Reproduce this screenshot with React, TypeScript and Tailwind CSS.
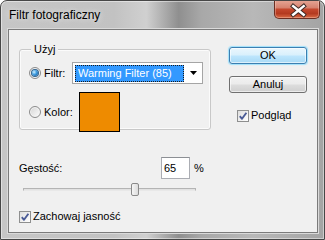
import React from "react";

function Radio({ checked }: { checked?: boolean }) {
  return (
    <span className="w-[12px] h-[12px] shrink-0 rounded-full border border-[#8c8c8c] bg-[linear-gradient(135deg,#d4d4d4,#fdfdfd)] flex items-center justify-center shadow-[inset_0_0_0_1px_#f4f4f4]">
      {checked && (
        <span className="w-[6px] h-[6px] rounded-full bg-[radial-gradient(circle_at_35%_35%,#d2f2ff_0%,#3d9be0_45%,#0d4a86_100%)] shadow-[0_0_0_1px_#33658f]" />
      )}
    </span>
  );
}

function Check() {
  return (
    <span className="w-[12px] h-[12px] shrink-0 border border-[#8e8f8f] bg-[linear-gradient(135deg,#dedede,#ffffff)] flex items-center justify-center">
      <svg width="10" height="10" viewBox="0 0 10 10">
        <path d="M1.8 5.2 L4 7.8 L8.4 1.8" fill="none" stroke="#4a5b96" strokeWidth="1.9" strokeLinejoin="round" />
      </svg>
    </span>
  );
}

export default function App() {
  return (
    <div className="w-[325px] h-[240px] bg-white font-['Liberation_Sans',Arial,sans-serif] text-[11px] text-black leading-[13px]">
      <div className="w-[325px] h-[240px] rounded-t-[7px] border border-[#474747] flex flex-col overflow-hidden shadow-[inset_0_0_0_1px_rgba(255,255,255,0.45)] bg-[linear-gradient(90deg,#c6c6c6_0%,#c2c2c2_35%,#d0d0d0_45%,#8f8f8f_55%,#a8a8a8_62%,#b8b8b8_78%,#a4a4a4_100%)]">
        <div className="h-[28px] flex items-start shrink-0">
          <div className="h-[28px] flex items-center pl-[8px] text-[12px] text-black [text-shadow:0_0_6px_rgba(255,255,255,0.8)]">
            Filtr fotograficzny
          </div>
          <div className="ml-auto mr-[4px] -mt-[1px] w-[46px] h-[19px] rounded-b-[5px] border border-[#6b2e22] border-t-0 bg-[linear-gradient(180deg,#e6a797_0%,#d68370_42%,#c4472d_52%,#b43a20_75%,#d96a44_100%)] shadow-[inset_0_0_0_1px_rgba(255,220,210,0.35)] flex items-center justify-center">
            <svg width="46" height="19" viewBox="0 0 46 19">
              <path d="M19 6 L30 15 M30 6 L19 15" stroke="#3d2a26" strokeWidth="4.6" strokeLinecap="square" />
              <path d="M19 6 L30 15 M30 6 L19 15" stroke="#ffffff" strokeWidth="2.6" strokeLinecap="square" />
            </svg>
          </div>
        </div>
        <div className="flex-1 ml-[7px] mr-[6px] mb-[6px] bg-[#f0f0f0] border border-[#7b7b7b] shadow-[0_0_0_1px_#dadada] pt-[17px] pl-[10px] flex flex-col">
          <div className="flex items-start">
            <div className="mt-[2px] w-[192px] h-[81px] border border-[#c8c8c8] rounded-[3px] relative pt-[12px] pl-[9px] shadow-[inset_0_0_0_1px_#fbfbfb]">
              <span className="absolute left-[11px] top-[-7px] px-[3px] bg-[#f0f0f0]">Użyj</span>
              <div className="flex items-center h-[22px]">
                <div className="w-[43px] flex items-center">
                  <Radio checked />
                  <span className="ml-[3px]">Filtr:</span>
                </div>
                <div className="w-[131px] h-[22px] bg-white border border-[#a5a5a5] flex items-center pl-[2px] pr-[5px]">
                  <div className="w-[109px] h-[17px] bg-[#3399ff] text-white border border-dotted border-[#1a1a1a] flex items-center pl-[2px]">
                    Warming Filter (85)
                  </div>
                  <svg className="ml-auto" width="7" height="4" viewBox="0 0 7 4">
                    <path d="M0 0 H7 L3.5 4 Z" fill="#000" />
                  </svg>
                </div>
              </div>
              <div className="mt-[8px] flex items-center">
                <div className="w-[43px] flex items-center">
                  <Radio />
                  <span className="ml-[3px]">Kolor:</span>
                </div>
                <div className="ml-[7px] w-[41px] h-[40px] bg-[#ee8b00] border border-black relative" />
              </div>
            </div>
            <div className="ml-[18px] flex flex-col">
              <div className="w-[78px] h-[17px] rounded-[3px] border border-[#3c7fb1] bg-[linear-gradient(180deg,#eaf6fd_0%,#d9f0fc_48%,#bee6fd_52%,#a7d9f5_100%)] shadow-[inset_0_0_0_1px_rgba(255,255,255,0.6),0_0_1px_1px_#9fe0fb] flex items-center justify-center">
                OK
              </div>
              <div className="mt-[12px] w-[78px] h-[17px] rounded-[3px] border border-[#707070] bg-[linear-gradient(180deg,#f2f2f2_0%,#ebebeb_48%,#dddddd_52%,#cfcfcf_100%)] shadow-[inset_0_0_0_1px_rgba(255,255,255,0.6)] flex items-center justify-center">
                Anuluj
              </div>
              <div className="mt-[16px] pl-[8px] flex items-center">
                <Check />
                <span className="ml-[2px]">Podgląd</span>
              </div>
            </div>
          </div>
          <div className="mt-[27px] flex items-center h-[22px]">
            <span className="w-[142px]">Gęstość:</span>
            <div className="w-[29px] h-[22px] bg-white border border-[#abadb3] border-t-[#8c8f94] flex items-center pl-[2px]">65</div>
            <span className="ml-[4px]">%</span>
          </div>
          <div className="mt-[4px] ml-[4px] w-[173px] h-[13px] relative">
            <div className="absolute left-0 right-0 top-[5px] h-[3px] border border-[#b4b4b4] border-b-[#e8e8e8] bg-[#e2e2e2]" />
            <div className="absolute left-[108px] top-0 w-[8px] h-[13px] rounded-[2px] border border-[#8a8a8a] bg-[linear-gradient(90deg,#f6f6f6,#dcdcdc)]" />
          </div>
          <div className="mt-[14px] flex items-center">
            <Check />
            <span className="ml-[2px]">Zachowaj jasność</span>
          </div>
        </div>
      </div>
    </div>
  );
}
